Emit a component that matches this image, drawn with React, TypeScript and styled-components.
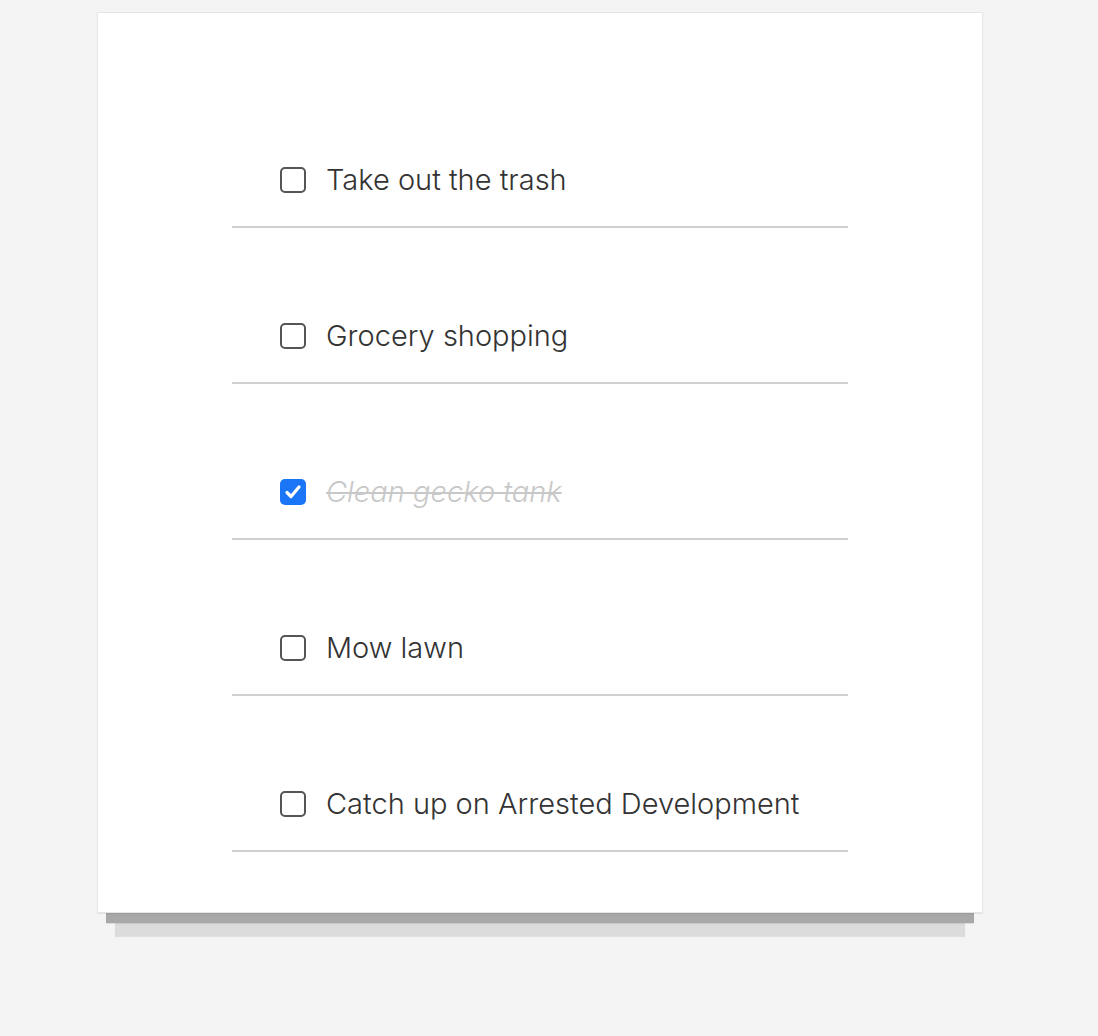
import React, { useState } from "react";
import styled, { createGlobalStyle } from "styled-components";

const Global = createGlobalStyle`
  html, body { margin: 0; padding: 0; background: #f4f4f4; }
  body { font-family: Inter, "Liberation Sans", Arial, sans-serif; }
`;

const Page = styled.div`
  padding: 12px 18px 0 0;
  min-height: 1036px;
  box-sizing: border-box;
`;

const Card = styled.div`
  width: 886px;
  margin: 0 auto;
  box-sizing: border-box;
  background: #fff;
  border: 1px solid #e6e6e6;
  padding: 59px 0 60px;
  box-shadow: 0 1px 1px rgba(0, 0, 0, 0.06),
    0 19px 0 -9px #a8a8a8, 0 20px 1px -9px rgba(0, 0, 0, 0.08),
    0 41px 0 -18px #dcdcdc, 0 42px 1px -18px rgba(0, 0, 0, 0.08);
`;

const List = styled.ul`
  list-style: none;
  margin: 0 auto;
  padding: 0;
  width: 616px;
`;

const Item = styled.li`
  display: flex;
  align-items: center;
  height: 156px;
  box-sizing: border-box;
  padding: 93px 0 32px 48px;
  border-bottom: 2px solid #d0d0d0;
  cursor: pointer;
`;

const Box = styled.span<{ $checked: boolean }>`
  flex: none;
  width: 26px;
  height: 26px;
  box-sizing: border-box;
  border-radius: 5px;
  border: ${(p) => (p.$checked ? "none" : "2px solid #555")};
  background: ${(p) => (p.$checked ? "#1a76f6" : "#fff")};
  display: flex;
  align-items: center;
  justify-content: center;
`;

const Label = styled.span<{ $checked: boolean }>`
  margin-left: 20px;
  font-size: 29px;
  font-weight: 300;
  line-height: 32px;
  color: ${(p) => (p.$checked ? "#c8c8c8" : "#333")};
  font-style: ${(p) => (p.$checked ? "italic" : "normal")};
  text-decoration: ${(p) => (p.$checked ? "line-through" : "none")};
  text-decoration-thickness: 2px;
`;

const todos = [
  { text: "Take out the trash", done: false },
  { text: "Grocery shopping", done: false },
  { text: "Clean gecko tank", done: true },
  { text: "Mow lawn", done: false },
  { text: "Catch up on Arrested Development", done: false },
];

export default function App() {
  const [items, setItems] = useState(todos);
  return (
    <Page>
      <Global />
      <Card>
        <List>
          {items.map((t, i) => (
            <Item
              key={t.text}
              onClick={() =>
                setItems(items.map((x, j) => (j === i ? { ...x, done: !x.done } : x)))
              }
            >
              <Box $checked={t.done}>
                {t.done && (
                  <svg width="20" height="20" viewBox="0 0 20 20">
                    <path
                      d="M4 10.5 L8 14.5 L16 5"
                      fill="none"
                      stroke="#fff"
                      strokeWidth="3.2"
                      strokeLinecap="round"
                      strokeLinejoin="round"
                    />
                  </svg>
                )}
              </Box>
              <Label $checked={t.done}>{t.text}</Label>
            </Item>
          ))}
        </List>
      </Card>
    </Page>
  );
}
